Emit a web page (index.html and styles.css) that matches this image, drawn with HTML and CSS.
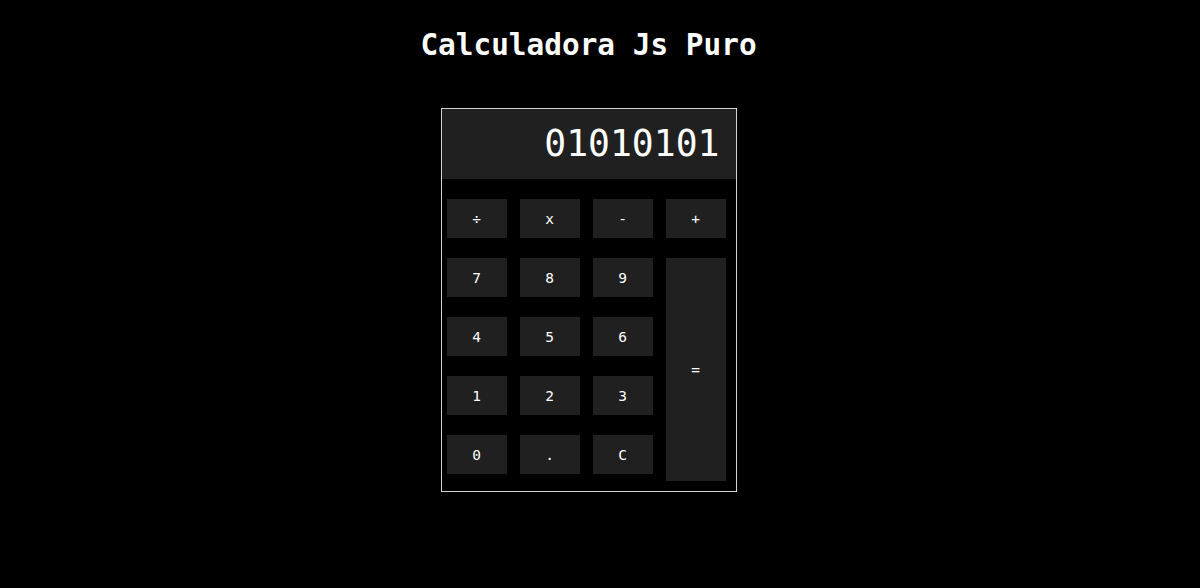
FILE: index.html
```html
<!DOCTYPE html>
<html lang="pt">
<head>
<meta charset="utf-8">
<title>Calculadora Js Puro</title>
<link rel="stylesheet" href="styles.css">
</head>
<body>
<main class="page">
  <h1 class="title">Calculadora Js Puro</h1>
  <div class="calc">
    <div class="display">01010101</div>
    <div class="keys">
      <button class="key">÷</button>
      <button class="key">x</button>
      <button class="key">-</button>
      <button class="key">+</button>
      <button class="key">7</button>
      <button class="key">8</button>
      <button class="key">9</button>
      <button class="key equals">=</button>
      <button class="key">4</button>
      <button class="key">5</button>
      <button class="key">6</button>
      <button class="key">1</button>
      <button class="key">2</button>
      <button class="key">3</button>
      <button class="key">0</button>
      <button class="key">.</button>
      <button class="key">C</button>
    </div>
  </div>
</main>
</body>
</html>
```
FILE: styles.css
```css
html, body {
  margin: 0;
  padding: 0;
  background: #000;
  color: #fff;
  font-family: "DejaVu Sans Mono", "Liberation Mono", monospace;
}
.page {
  display: flex;
  flex-direction: column;
  align-items: center;
  padding: 0 23px 0 0;
}
.title {
  margin: 28px 0 0;
  font-size: 29.4px;
  font-weight: bold;
  line-height: 34px;
  height: 46px;
}
.calc {
  margin-top: 34px;
  width: 294px;
  border: 1px solid #d4d4d4;
  background: #000;
}
.display {
  height: 70px;
  background: #202020;
  font-size: 36.4px;
  line-height: 70px;
  text-align: right;
  padding-right: 16px;
  box-sizing: border-box;
}
.keys {
  display: grid;
  grid-template-columns: repeat(4, 60px);
  grid-template-rows: repeat(5, 39px);
  column-gap: 13px;
  row-gap: 20px;
  padding: 20px 0 17px 5px;
}
.key {
  background: #202020;
  color: #fff;
  border: none;
  margin: 0;
  padding: 0;
  font-family: "DejaVu Sans Mono", "Liberation Mono", monospace;
  font-size: 14.5px;
}
.equals {
  grid-column: 4;
  grid-row: 2 / span 4;
  align-self: start;
  height: 223px;
}
```
